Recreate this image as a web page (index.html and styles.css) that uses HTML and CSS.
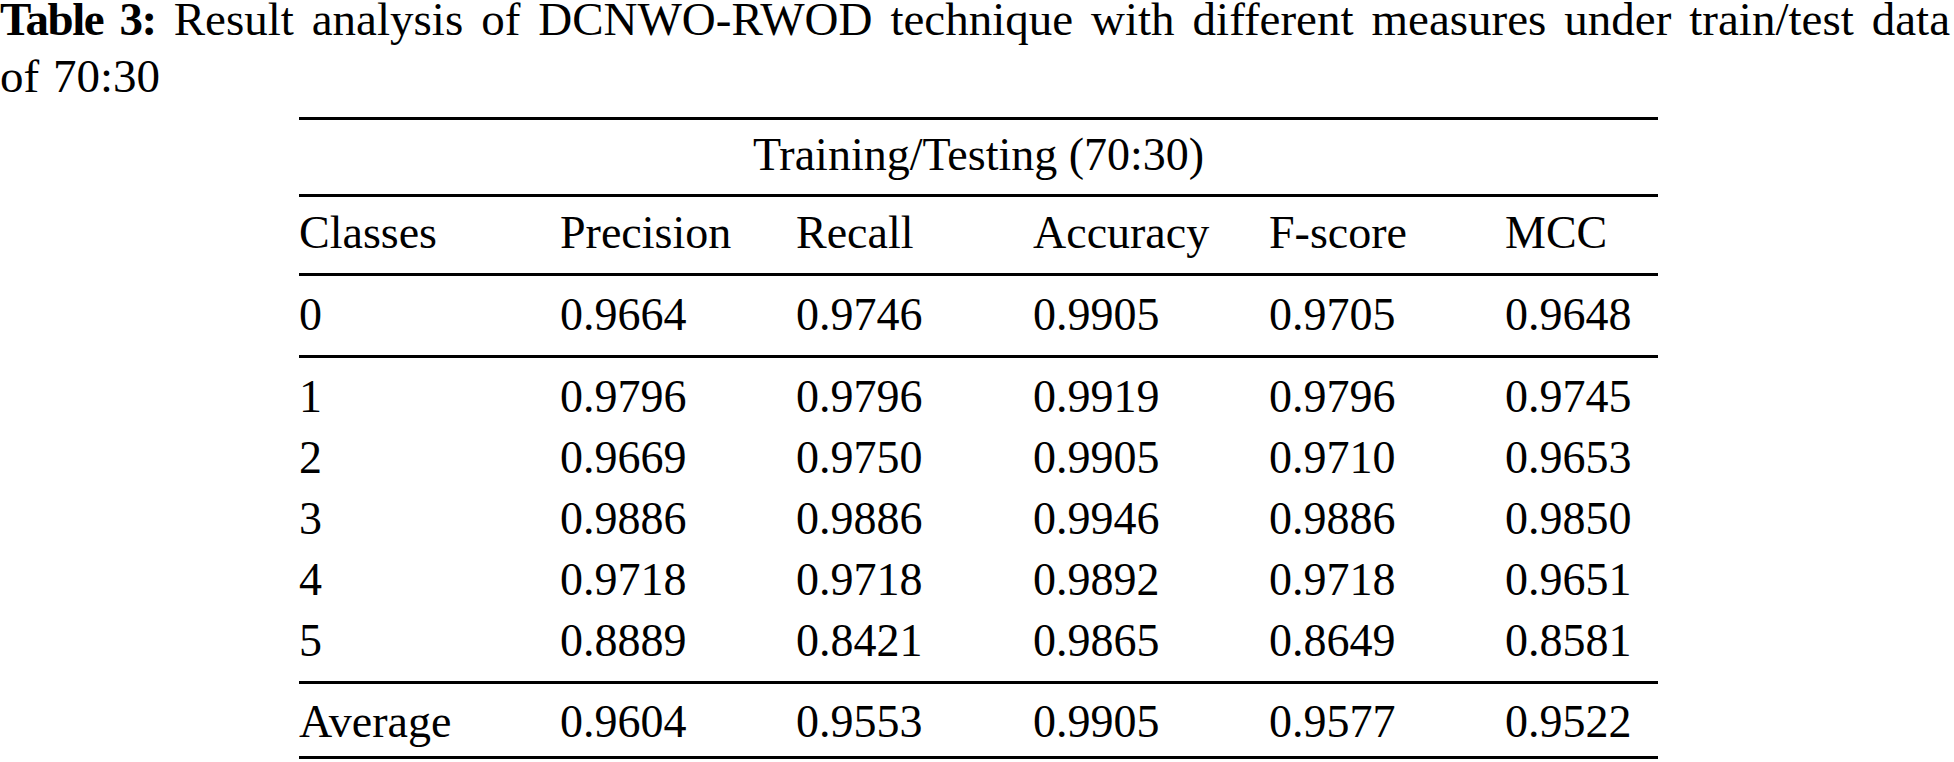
FILE: index.html
```html
<!DOCTYPE html>
<html lang="en">
<head>
<meta charset="utf-8">
<title>Table 3</title>
<link rel="stylesheet" href="styles.css">
</head>
<body>
<p class="caption"><b class="label">Table 3:</b> Result analysis of DCNWO-RWOD technique with different measures under train/test data of 70:30</p>
<table class="results">
  <colgroup>
    <col class="c-class">
    <col class="c-prec">
    <col class="c-rec">
    <col class="c-acc">
    <col class="c-f">
    <col class="c-mcc">
  </colgroup>
  <thead>
    <tr class="title-row"><th colspan="6">Training/Testing (70:30)</th></tr>
    <tr class="head-row">
      <th>Classes</th><th>Precision</th><th>Recall</th><th>Accuracy</th><th>F-score</th><th>MCC</th>
    </tr>
  </thead>
  <tbody class="group">
    <tr class="first last"><td>0</td><td>0.9664</td><td>0.9746</td><td>0.9905</td><td>0.9705</td><td>0.9648</td></tr>
  </tbody>
  <tbody class="group">
    <tr class="first"><td>1</td><td>0.9796</td><td>0.9796</td><td>0.9919</td><td>0.9796</td><td>0.9745</td></tr>
    <tr><td>2</td><td>0.9669</td><td>0.9750</td><td>0.9905</td><td>0.9710</td><td>0.9653</td></tr>
    <tr><td>3</td><td>0.9886</td><td>0.9886</td><td>0.9946</td><td>0.9886</td><td>0.9850</td></tr>
    <tr><td>4</td><td>0.9718</td><td>0.9718</td><td>0.9892</td><td>0.9718</td><td>0.9651</td></tr>
    <tr class="last"><td>5</td><td>0.8889</td><td>0.8421</td><td>0.9865</td><td>0.8649</td><td>0.8581</td></tr>
  </tbody>
  <tfoot>
    <tr class="avg-row"><td>Average</td><td>0.9604</td><td>0.9553</td><td>0.9905</td><td>0.9577</td><td>0.9522</td></tr>
  </tfoot>
</table>
</body>
</html>
```

FILE: styles.css
```css
html, body {
  background: #ffffff;
}

body {
  margin: 0;
  color: #000000;
  font-family: "Liberation Serif", "Times New Roman", serif;
  font-size: 46px;
}

.caption {
  margin: -9px 4px 0 0;
  font-size: 47px;
  line-height: 57px;
  text-align: justify;
  word-spacing: 2px;
}

.label {
  font-weight: bold;
  letter-spacing: -1.5px;
}

.results {
  margin: 12px 0 0 299px;
  width: 1359px;
  table-layout: fixed;
  border-collapse: separate;
  border-spacing: 0;
  line-height: 61px;
}

.c-class { width: 261px; }
.c-prec { width: 236px; }
.c-rec { width: 237px; }
.c-acc { width: 236px; }
.c-f { width: 236px; }
.c-mcc { width: 153px; }

.results th,
.results td {
  padding: 0;
  text-align: left;
  font-weight: normal;
  white-space: nowrap;
}

.title-row th {
  text-align: center;
  border-top: 3px solid #000;
  border-bottom: 3px solid #000;
  padding: 4px 0 9px;
}

.head-row th {
  border-bottom: 3px solid #000;
  padding: 5px 0 10px;
}

.group .first td {
  padding-top: 8px;
}

.group .last td {
  padding-bottom: 10px;
  border-bottom: 3px solid #000;
}

.avg-row td {
  padding: 7px 0 4px;
  border-bottom: 3px solid #000;
}
```
